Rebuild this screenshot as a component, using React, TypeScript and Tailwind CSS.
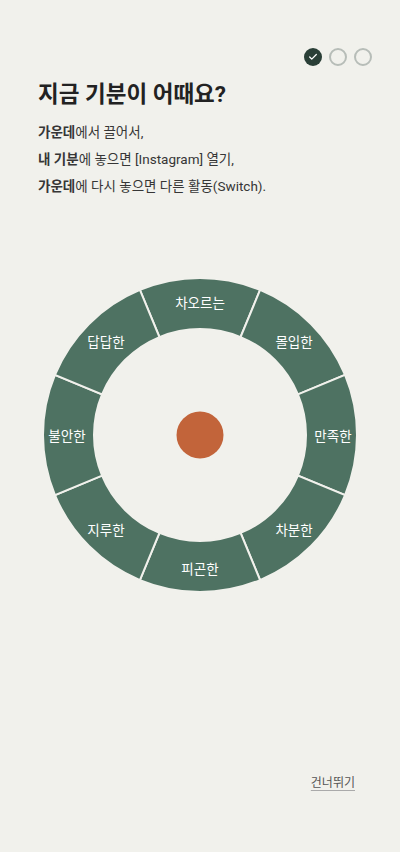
import { Check } from "lucide-react";

const moods = ["차오르는", "몰입한", "만족한", "차분한", "피곤한", "지루한", "불안한", "답답한"];

const C = 160;
const R_OUT = 157;
const R_IN = 106;
const R_LABEL = 133;

const pt = (r: number, deg: number) => {
  const a = (deg * Math.PI) / 180;
  return [C + r * Math.cos(a), C + r * Math.sin(a)];
};

const sector = (a1: number, a2: number) => {
  const [x1, y1] = pt(R_OUT, a1);
  const [x2, y2] = pt(R_OUT, a2);
  const [x3, y3] = pt(R_IN, a2);
  const [x4, y4] = pt(R_IN, a1);
  return `M${x1} ${y1} A${R_OUT} ${R_OUT} 0 0 1 ${x2} ${y2} L${x3} ${y3} A${R_IN} ${R_IN} 0 0 0 ${x4} ${y4} Z`;
};

const MoodWheel = () => (
  <svg width="320" height="320" viewBox="0 0 320 320">
    {moods.map((m, i) => {
      const mid = -90 + i * 45;
      const [lx, ly] = pt(R_LABEL, mid);
      return (
        <g key={m}>
          <path d={sector(mid - 22.5, mid + 22.5)} fill="#4e7262" stroke="#f1f1ec" strokeWidth="2" />
          <text
            x={lx}
            y={ly}
            fill="#ffffff"
            fontSize="13.5"
            textAnchor="middle"
            dominantBaseline="central"
            fontFamily="'Noto Sans CJK KR', sans-serif"
          >
            {m}
          </text>
        </g>
      );
    })}
    <circle cx={C} cy={C} r="23.5" fill="#c2643a" />
  </svg>
);

const App = () => {
  return (
    <div
      className="min-h-[852px] w-[400px] bg-[#f1f1ec] text-[#2b2b2b] flex flex-col"
      style={{ fontFamily: "Roboto, 'Noto Sans CJK KR', sans-serif" }}
    >
      <div className="flex justify-end gap-[7px] pt-[48px] pr-[28px]">
        <div className="w-[18px] h-[18px] rounded-full bg-[#2a3f37] flex items-center justify-center">
          <Check className="w-[10px] h-[10px] text-white" strokeWidth={3} />
        </div>
        <div className="w-[18px] h-[18px] rounded-full border-2 border-[#b7bdb8]" />
        <div className="w-[18px] h-[18px] rounded-full border-2 border-[#b7bdb8]" />
      </div>

      <h1 className="mt-[13px] px-[38px] text-[22.5px] leading-[30px] font-bold text-[#222]">
        지금 기분이 어때요?
      </h1>

      <div className="mt-[10px] px-[38px] text-[13.5px] leading-[27px] text-[#363636]">
        <p>
          <b className="font-bold">가운데</b>에서 끌어서,
        </p>
        <p>
          <b className="font-bold">내 기분</b>에 놓으면 [Instagram] 열기,
        </p>
        <p>
          <b className="font-bold">가운데</b>에 다시 놓으면 다른 활동(Switch).
        </p>
      </div>

      <div className="mt-[75px] flex justify-center">
        <MoodWheel />
      </div>

      <div className="mt-[178px] flex justify-end pr-[45px]">
        <button className="text-[12px] leading-[20px] text-[#555] underline underline-offset-[3px] decoration-[#aaa]">
          건너뛰기
        </button>
      </div>
    </div>
  );
};

export default App;
